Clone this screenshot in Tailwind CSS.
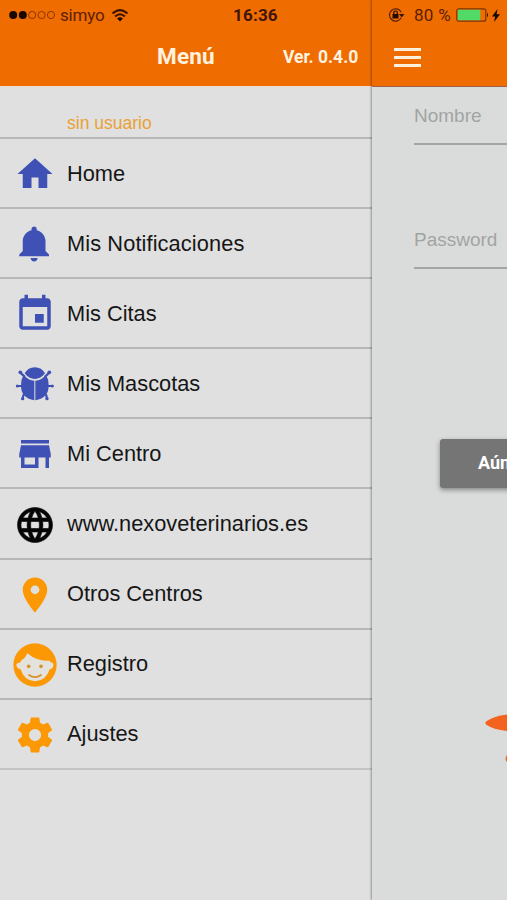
<!DOCTYPE html>
<html lang="es">
<head>
<meta charset="utf-8">
<title>Menú</title>
<script src="https://cdn.jsdelivr.net/npm/@tailwindcss/browser@4"></script>
</head>
<body class="w-[507px] h-[900px] overflow-hidden bg-[#e0e0e0] font-['Liberation_Sans',Arial,sans-serif]">
<div class="flex w-[507px] h-[900px] overflow-hidden">
  <!-- Side menu -->
  <aside class="w-[372px] shrink-0 h-full flex flex-col bg-[#e0e0e0]">
    <header class="h-[86px] shrink-0 bg-[#ef6c00]">
      <div class="h-[30px] flex items-center pl-[9px] text-[#5c2005]">
        <svg class="w-[47px] h-[10px] shrink-0" viewBox="0 0 47 10"><g fill="#180800"><circle cx="4.2" cy="5" r="4"/><circle cx="13.8" cy="5" r="4"/></g><g fill="none" stroke="#8f3503" stroke-width="1"><circle cx="23.2" cy="5" r="3.6"/><circle cx="32.6" cy="5" r="3.6"/><circle cx="42" cy="5" r="3.6"/></g></svg>
        <span class="ml-[4px] w-[45px] whitespace-nowrap font-['Roboto'] text-[17px] leading-[30px] tracking-[-.2px]">simyo</span>
        <svg class="ml-[6px] w-[18px] h-[13px] shrink-0" viewBox="0 0 17 13"><g fill="none" stroke="#3a1304" stroke-width="2"><path d="M1 4.6Q8.500-2.400 16 4.600"/><path d="M3.600 7.500Q8.500 2.900 13.400 7.500"/></g><path d="M5.600 9.500Q8.500 6.900 11.400 9.500L8.500 12.500z" fill="#1f0a02"/></svg>
        <span class="ml-[104px] whitespace-nowrap font-['Roboto'] font-bold text-[17px] leading-[30px] tracking-[.2px] text-[#42150a]">16:36</span>
      </div>
      <div class="h-[54px] flex items-center text-[#fff3e0] font-['Roboto'] font-bold">
        <h1 class="ml-[157px] w-[126px] text-[22.500px] tracking-[.2px]">Menú</h1>
        <span class="text-[17.500px] whitespace-nowrap tracking-[0px]">Ver. 0.4.0</span>
      </div>
    </header>
    <div class="h-[53px] shrink-0 pt-[25px] pl-[67px] border-t border-t-[#efdacb] border-b-2 border-b-[#b7b7b7] text-[17.500px] leading-[22px] text-[#e9a035]">sin usuario</div>
    <nav class="flex flex-col text-[21.800px] text-[#161616]">
      <a class="h-[70.100px] border-b-2 border-[#b7b7b7] flex items-center pt-[2px] pl-[13.500px]"><svg class="w-[42px] h-[42px] mr-[11.500px] shrink-0" viewBox="0 0 24 24" fill="#3f51b5"><path d="M10 20v-6h4v6h5v-8h3L12 3 2 12h3v8z"/></svg><span>Home</span></a>
      <a class="h-[70.100px] border-b-2 border-[#b7b7b7] flex items-center pt-[2px] pl-[13.500px]"><svg class="w-[42px] h-[42px] mr-[11.500px] shrink-0" viewBox="0 0 24 24" fill="#3f51b5"><path d="M11.500 22c1.100 0 2-.9 2-2h-4c0 1.100.9 2 2 2zm6.500-6v-5.500c0-3.070-2.130-5.640-5-6.320V3.500c0-.83-.67-1.500-1.500-1.500S10 2.670 10 3.500v.68c-2.870.68-5 3.250-5 6.320V16l-2 2v1h17v-1l-2-2z"/></svg><span class="tracking-[.1px]">Mis Notificaciones</span></a>
      <a class="h-[70.100px] border-b-2 border-[#b7b7b7] flex items-center pt-[2px] pl-[13.500px]"><svg class="w-[42px] h-[42px] mr-[11.500px] shrink-0" viewBox="0 0 24 24" fill="#3f51b5"><path d="M17 12h-5v5h5v-5zM16 1v2H8V1H6v2H5c-1.110 0-1.990.9-1.990 2L3 19c0 1.100.89 2 2 2h14c1.100 0 2-.9 2-2V5c0-1.100-.9-2-2-2h-1V1h-2zm3 18H5V8h14v11z"/></svg><span>Mis Citas</span></a>
      <a class="h-[70.100px] border-b-2 border-[#b7b7b7] flex items-center pt-[2px] pl-[13.500px]"><svg class="w-[42px] h-[42px] mr-[11.500px] shrink-0" viewBox="41 249 126 126"><g fill="none" stroke="#3f51b5" stroke-width="6.500" stroke-linecap="round"><path d="M59 277L72 289M51 318H66M67 357L69 346 78 337M148 277L135 289M156 318H141M140 357L138 346 129 337"/></g><g fill="#3f51b5"><circle cx="60" cy="277" r="5.500"/><circle cx="147" cy="277" r="5.500"/><circle cx="51" cy="318" r="4.500"/><circle cx="156" cy="318" r="4.500"/><circle cx="67" cy="356" r="5"/><circle cx="140" cy="356" r="5"/><path d="M73 280Q83 262 103.500 262T134 280Q121 297 103.500 297T73 280z"/><path d="M70 284Q82 300 102 302V361Q61 354 62 316 62 297 70 284zM137 284Q125 300 105 302V361Q146 354 145 316 145 297 137 284z"/></g></svg><span>Mis Mascotas</span></a>
      <a class="h-[70.100px] border-b-2 border-[#b7b7b7] flex items-center pt-[2px] pl-[13.500px]"><svg class="w-[42px] h-[42px] mr-[11.500px] shrink-0" viewBox="0 0 24 24" fill="#3f51b5"><path d="M20 4H4v2h16V4zm1 10v-2l-1-5H4l-1 5v2h1v6h10v-6h4v6h2v-6h1zm-9 4H6v-4h6v4z"/></svg><span>Mi Centro</span></a>
      <a class="h-[70.100px] border-b-2 border-[#b7b7b7] flex items-center pt-[2px] pl-[13.500px]"><svg class="w-[42px] h-[42px] mr-[11.500px] shrink-0" viewBox="0 0 24 24" fill="#050505" stroke="#050505" stroke-width=".35"><path d="M11.990 2C6.470 2 2 6.480 2 12s4.470 10 9.990 10C17.520 22 22 17.520 22 12S17.520 2 11.990 2zm6.930 6h-2.950c-.32-1.250-.78-2.450-1.380-3.560 1.840.63 3.370 1.910 4.330 3.560zM12 4.040c.83 1.200 1.480 2.530 1.910 3.960h-3.820c.43-1.430 1.080-2.760 1.910-3.960zM4.260 14C4.100 13.360 4 12.690 4 12s.1-1.360.26-2h3.380c-.08.66-.14 1.320-.14 2 0 .68.06 1.340.14 2H4.260zm.82 2h2.950c.32 1.250.78 2.450 1.380 3.560-1.840-.63-3.370-1.900-4.330-3.560zm2.950-8H5.080c.96-1.660 2.490-2.930 4.330-3.560C8.810 5.550 8.350 6.750 8.030 8zM12 19.960c-.83-1.200-1.480-2.530-1.910-3.960h3.820c-.43 1.430-1.080 2.760-1.910 3.960zM14.340 14H9.660c-.09-.66-.16-1.320-.16-2 0-.68.07-1.350.16-2h4.680c.09.65.16 1.320.16 2 0 .68-.07 1.340-.16 2zm.25 5.560c.6-1.110 1.060-2.310 1.380-3.560h2.950c-.96 1.650-2.490 2.930-4.330 3.560zM16.360 14c.08-.66.14-1.320.14-2 0-.68-.06-1.340-.14-2h3.380c.16.64.26 1.310.26 2s-.1 1.360-.26 2h-3.380z"/></svg><span>www.nexoveterinarios.es</span></a>
      <a class="h-[70.100px] border-b-2 border-[#b7b7b7] flex items-center pt-[2px] pl-[13.500px]"><svg class="w-[42px] h-[42px] mr-[11.500px] shrink-0" viewBox="0 0 24 24" fill="#fb9803"><path d="M12 2C8.130 2 5 5.130 5 9c0 5.250 7 13 7 13s7-7.750 7-13c0-3.870-3.130-7-7-7zm0 9.500a2.500 2.500 0 1 1 0-5 2.500 2.500 0 0 1 0 5z"/></svg><span>Otros Centros</span></a>
      <a class="h-[70.100px] border-b-2 border-[#b7b7b7] flex items-center pt-[2px] pl-[12.500px]"><svg class="w-[44px] h-[44px] mr-[10.500px] shrink-0" viewBox="38 246 132 132"><circle cx="104" cy="312" r="65" fill="#fb9803"/><path d="M62 299Q74 293 81 277 111 302 148 299 150 302 150 304 160 304 159 313 158 324 148 325 137 360 104 361 71 360 61 325 50 323 48 313 48 304 59 305z" fill="#e4e2dd"/><g fill="#d89029"><circle cx="85" cy="316" r="5.500"/><circle cx="122" cy="316" r="5.500"/></g><path d="M86 342Q104 355 122 342" fill="none" stroke="#d89029" stroke-width="5" stroke-linecap="round"/></svg><span>Registro</span></a>
      <a class="h-[70.100px] border-b-2 border-[#c4c4c4] flex items-center pt-[2px] pl-[13.500px]"><svg class="w-[42px] h-[42px] mr-[11.500px] shrink-0" viewBox="0 0 24 24" fill="#fb9803"><path d="M19.430 12.980c.04-.32.07-.64.07-.98s-.03-.66-.07-.98l2.110-1.650c.19-.15.24-.42.12-.64l-2-3.460c-.12-.22-.39-.3-.61-.22l-2.490 1c-.52-.4-1.080-.73-1.690-.98l-.38-2.650C14.460 2.180 14.250 2 14 2h-4c-.25 0-.46.18-.49.42l-.38 2.650c-.61.25-1.170.59-1.690.98l-2.490-1c-.23-.09-.49 0-.61.22l-2 3.460c-.13.22-.07.49.12.64l2.110 1.650c-.04.32-.07.65-.07.98s.03.66.07.98l-2.110 1.650c-.19.15-.24.42-.12.64l2 3.460c.12.22.39.3.61.22l2.490-1c.52.4 1.080.73 1.690.98l.38 2.650c.03.24.24.42.49.42h4c.25 0 .46-.18.49-.42l.38-2.650c.61-.25 1.170-.59 1.690-.98l2.490 1c.23.09.49 0 .61-.22l2-3.460c.12-.22.07-.49-.12-.64l-2.110-1.650zM12 15.500a3.500 3.500 0 1 1 0-7 3.500 3.500 0 0 1 0 7z"/></svg><span>Ajustes</span></a>
    </nav>
  </aside>
  <!-- Login page, pushed to the right -->
  <main class="w-[135px] shrink-0 h-full flex flex-col overflow-hidden bg-[#dadcdb] shadow-[-1px_0_2px_rgba(0,0,0,0.35)]">
    <header class="h-[87px] shrink-0 bg-[#ef6c00] border-b border-[#a0604a]">
      <div class="h-[30px] flex items-center pl-[16px] text-[#5c2005]">
        <svg class="w-[17px] h-[14px] shrink-0" viewBox="0 0 17 14"><path d="M13.200 9.800A6.200 6.200 0 1 1 13.200 4.200" fill="none" stroke="#5a2005" stroke-width="1.200"/><path d="M11 6h5.500L13.700 9.500z" fill="#3a1304"/><rect x="4.500" y="6" width="6" height="4.500" fill="#240b02"/><path d="M5.700 6V4.800a1.800 1.800 0 0 1 3.600 0V6" fill="none" stroke="#240b02" stroke-width="1.200"/></svg>
        <span class="ml-[9px] w-[42px] whitespace-nowrap font-['Roboto'] text-[17px] leading-[30px] tracking-[.3px]">80 %</span>
        <svg class="w-[33px] h-[14px] shrink-0" viewBox="0 0 33 14"><rect x=".8" y=".8" width="29" height="12.400" rx="2" fill="none" stroke="#7a3508" stroke-width="1.200"/><rect x="1.800" y="1.800" width="22.500" height="10.400" fill="#52da66"/><path d="M31 4.500q2 2.500 0 5z" fill="#3a1304"/></svg>
        <svg class="ml-[3px] w-[8px] h-[13px] shrink-0" viewBox="0 0 8 13"><path d="M5.500 0L0 7.400h3.200L2 13 8 5.300H4.600z" fill="#180800"/></svg>
      </div>
      <div class="pt-[18px] pl-[22px] flex flex-col gap-[5px]">
        <i class="block w-[27px] h-[3px] bg-[#fff0dc]"></i><i class="block w-[27px] h-[3px] bg-[#fff0dc]"></i><i class="block w-[27px] h-[3px] bg-[#fff0dc]"></i>
      </div>
    </header>
    <div class="ml-[42px] h-[58px] pt-[17px] shrink-0 border-b-2 border-[#a4a6a5] text-[19px] leading-[24px] text-[#a2a4a3]">Nombre</div>
    <div class="ml-[42px] h-[124px] pt-[83px] shrink-0 border-b-2 border-[#a4a6a5] text-[19px] leading-[24px] text-[#a2a4a3]">Password</div>
    <div class="mt-[170px] ml-[68px] w-[200px] h-[49px] shrink-0 rounded-[3px] bg-[#757575] shadow-[0_2px_5px_rgba(0,0,0,0.4)] pl-[38px] font-['Roboto'] font-bold text-[18px] leading-[48px] text-white whitespace-nowrap">Aún</div>
    <svg class="mt-[220px] ml-[109px] w-[26px] h-[60px] shrink-0" viewBox="0 0 26 60"><path d="M5 13.500Q13 8 26 6.500V23Q12 21.500 5 16.500 3.500 15 5 13.500z" fill="#f4621f"/><path d="M26 47q-3 4 0 7z" fill="#f4621f"/></svg>
  </main>
</div>
</body>
</html>
